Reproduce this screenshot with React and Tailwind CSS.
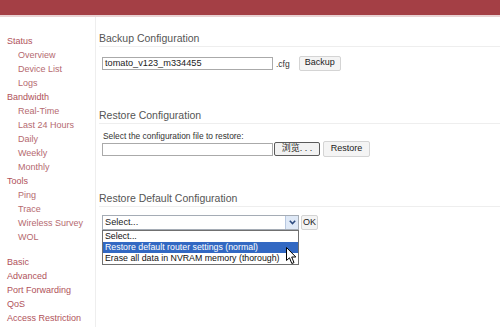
import React from "react";

const side = [
  ["Status", 0], ["Overview", 1], ["Device List", 1], ["Logs", 1],
  ["Bandwidth", 0], ["Real-Time", 1], ["Last 24 Hours", 1], ["Daily", 1], ["Weekly", 1], ["Monthly", 1],
  ["Tools", 0], ["Ping", 1], ["Trace", 1], ["Wireless Survey", 1], ["WOL", 1],
];
const side2 = ["Basic", "Advanced", "Port Forwarding", "QoS", "Access Restriction"];

function Btn({ children, className = "" }) {
  return (
    <div className={"flex items-center justify-center border border-[#d4d4d4] bg-[#f4f4f4] rounded-[2px] text-[#222] " + className}>
      {children}
    </div>
  );
}

export default function App() {
  return (
    <div className="w-[500px] h-[327px] bg-white overflow-hidden relative" style={{ fontFamily: '"Liberation Sans", Arial, sans-serif' }}>
      <div className="h-[15px] bg-[#a43f45]" />
      <div className="h-[2px] bg-[#e9d2d3]" />
      <div className="flex h-[310px]">
        <div className="w-[96px] border-r border-[#eeeeee] pt-[17px] text-[9px] leading-[14px] text-[#b0525a] shrink-0">
          {side.map(([t, l]) => (
            <div key={t} className={l ? "pl-[18px] text-[#b56a70]" : "pl-[7px]"}>{t}</div>
          ))}
          <div className="h-[11px]" />
          {side2.map((t) => (
            <div key={t} className="pl-[7px]">{t}</div>
          ))}
        </div>
        <div className="flex-1 pl-[3px] pt-[13px] text-[#333]">
          <div className="h-[17px] border-b border-[#eeeeee] text-[10.5px] leading-[17px] text-[#555]">Backup Configuration</div>
          <div className="flex items-center mt-[9px] pl-[3px] h-[14px]">
            <div className="w-[171px] h-[13px] border border-[#aaaaaa] text-[9.2px] leading-[11px] pl-[2px] text-[#222]">tomato_v123_m334455</div>
            <span className="text-[8.5px] ml-[3px] mt-[3px]">.cfg</span>
            <Btn className="ml-[9px] w-[42px] h-[15px] text-[9px]">Backup</Btn>
          </div>

          <div className="mt-[37px] h-[17px] border-b border-[#eeeeee] text-[10.5px] leading-[17px] text-[#555]">Restore Configuration</div>
          <div className="mt-[8px] pl-[4px] text-[8.4px] leading-[9px]">Select the configuration file to restore:</div>
          <div className="flex items-center pl-[3px] h-[16px]">
            <div className="w-[171px] h-[13px] border border-[#aaaaaa]" />
            <div className="ml-[1px] w-[46px] h-[14px] border border-[#5a5a5a] rounded-[2px] bg-[#f2f2f2] flex items-center justify-center text-[9px] text-[#222]" style={{ fontFamily: '"Liberation Sans", "Noto Sans CJK SC", sans-serif' }}>浏览. . .</div>
            <Btn className="ml-[3px] w-[47px] h-[16px] text-[9px]">Restore</Btn>
          </div>

          <div className="mt-[32px] h-[18px] border-b border-[#eeeeee] text-[10.5px] leading-[18px] text-[#555]">Restore Default Configuration</div>
          <div className="flex items-start mt-[8px] pl-[3px]">
            <div className="relative">
              <div className="w-[197px] h-[15px] border border-[#a5acb5] flex items-center text-[9.2px] text-[#222]">
                <span className="pl-[2px] flex-1">Select...</span>
                <div className="w-[13px] h-[13px] bg-[#dfe9f7] border-l border-[#b8c8e0] flex items-center justify-center">
                  <svg width="7" height="5" viewBox="0 0 7 5"><path d="M0.8 0.8 L3.5 3.6 L6.2 0.8" stroke="#2c4a7e" strokeWidth="1.5" fill="none" /></svg>
                </div>
              </div>
              <div className="absolute left-0 top-[15px] w-[197px] border border-[#707070] bg-white text-[8.8px] leading-[11px] text-[#111]">
                <div className="pl-[2px]">Select...</div>
                <div className="pl-[2px] bg-[#3268c2] text-white">Restore default router settings (normal)</div>
                <div className="pl-[2px]">Erase all data in NVRAM memory (thorough)</div>
              </div>
            </div>
            <Btn className="ml-[2px] w-[17px] h-[15px] text-[9px]">OK</Btn>
          </div>
        </div>
      </div>
      <svg className="absolute left-[286px] top-[247px]" width="11" height="18" viewBox="0 0 11 18">
        <path d="M0.5 0.5 L0.5 13.5 L3.5 10.8 L5.8 16.5 L8 15.6 L5.7 10 L9.8 10 Z" fill="white" stroke="black" strokeWidth="1" strokeLinejoin="round" />
      </svg>
    </div>
  );
}
